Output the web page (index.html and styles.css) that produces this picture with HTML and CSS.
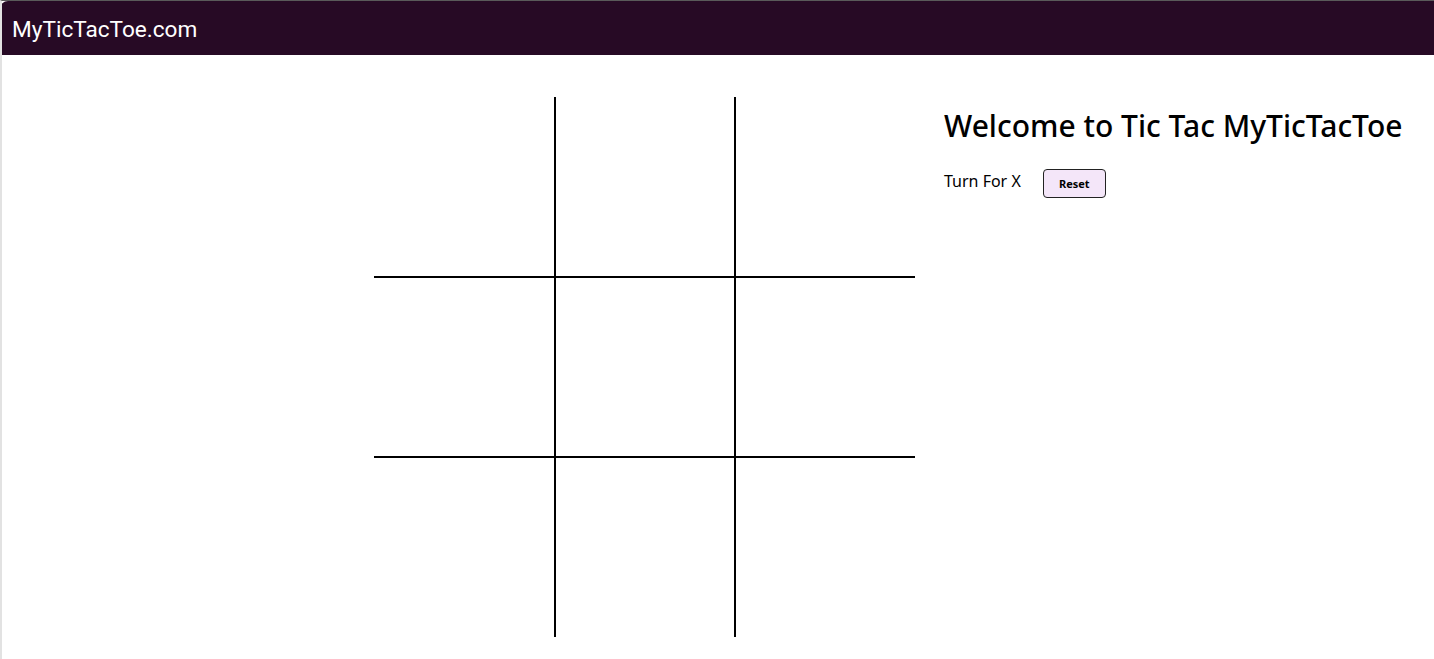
FILE: index.html
```html
<!DOCTYPE html>
<html>
<head>
<meta charset="utf-8">
<title>MyTicTacToe.com</title>
<link rel="stylesheet" href="styles.css">
</head>
<body>
<div class="frame">
  <header class="topbar">
    <span class="brand">MyTicTacToe.com</span>
  </header>
  <main class="game">
    <div class="board">
      <div class="cell"></div>
      <div class="cell"></div>
      <div class="cell"></div>
      <div class="cell"></div>
      <div class="cell"></div>
      <div class="cell"></div>
      <div class="cell"></div>
      <div class="cell"></div>
      <div class="cell"></div>
    </div>
    <section class="panel">
      <h1 class="title">Welcome to Tic Tac MyTicTacToe</h1>
      <div class="status">
        <span class="turn">Turn For X</span>
        <button class="reset">Reset</button>
      </div>
    </section>
  </main>
</div>
</body>
</html>
```
FILE: styles.css
```css
html, body {
  margin: 0;
  padding: 0;
  background: #ffffff;
}
.frame {
  height: 659px;
  box-sizing: border-box;
  border-top: 1px solid #5a5a5a;
  border-left: 2px solid #e2e2e2;
  overflow: hidden;
}
.topbar {
  height: 54px;
  background: #270a25;
  border-top-left-radius: 8px;
  display: flex;
  align-items: center;
  margin-left: -2px;
  padding-left: 12px;
}
.brand {
  font-family: Roboto, "Liberation Sans", sans-serif;
  font-size: 22.6px;
  color: #ffffff;
  padding-top: 2px;
}
.game {
  display: flex;
  align-items: flex-start;
  padding: 42px 0 0 372px;
  gap: 29px;
}
.board {
  display: grid;
  grid-template-columns: 180px 180px 181px;
  grid-template-rows: 179px 180px 181px;
  flex: none;
}
.cell {
  box-sizing: border-box;
}
.cell:nth-child(3n+2),
.cell:nth-child(3n+3) {
  border-left: 2px solid #000;
}
.cell:nth-child(n+4) {
  border-top: 2px solid #000;
}
.panel {
  font-family: "Noto Sans", sans-serif;
  color: #000;
}
.title {
  margin: 11px 0 0 0;
  font-size: 30px;
  font-weight: 500;
  line-height: 36px;
}
.status {
  display: flex;
  align-items: center;
  gap: 22px;
  margin-top: 23px;
}
.turn {
  font-size: 16px;
  margin-bottom: 3px;
}
.reset {
  width: 63px;
  height: 29px;
  margin-top: 2px;
  background: #f4e6f9;
  border: 1px solid #222;
  border-radius: 4px;
  font-family: "Noto Sans", sans-serif;
  font-weight: 700;
  font-size: 11px;
  color: #000;
  padding: 0;
}
```
